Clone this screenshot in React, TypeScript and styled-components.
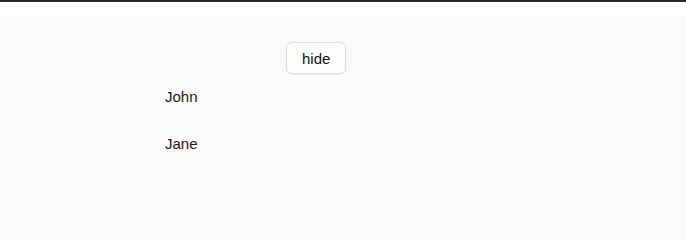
import styled, { createGlobalStyle } from "styled-components";

const GlobalStyle = createGlobalStyle`
  html, body {
    margin: 0;
    padding: 0;
    background: #fafafa;
  }
  body {
    font-family: "Liberation Sans", Arial, sans-serif;
    color: #1a1a1a;
  }
`;

const TopBar = styled.div`
  height: 2px;
  background: #2b2b2b;
`;

const Header = styled.div`
  height: 13px;
  background: #ffffff;
`;

const Main = styled.main`
  display: flex;
  flex-direction: column;
  padding-top: 27px;
  height: 196px;
`;

const Toolbar = styled.div`
  display: flex;
  padding-left: 286px;
`;

const Button = styled.button`
  height: 32px;
  padding: 0 15px;
  font-family: inherit;
  font-size: 15px;
  color: #111;
  background: #fdfdfd;
  border: 1px solid #dedede;
  border-radius: 6px;
  box-shadow: 0 1px 2px rgba(0, 0, 0, 0.06);
  cursor: pointer;
`;

const List = styled.ul`
  list-style: none;
  margin: 14px 0 0;
  padding: 0 0 0 165px;
  display: flex;
  flex-direction: column;
  gap: 29px;
`;

const Name = styled.li`
  font-size: 15px;
  line-height: 18px;
`;

const people = ["John", "Jane"];

export default function App() {
  return (
    <>
      <GlobalStyle />
      <TopBar />
      <Header />
      <Main>
        <Toolbar>
          <Button>hide</Button>
        </Toolbar>
        <List>
          {people.map((p) => (
            <Name key={p}>{p}</Name>
          ))}
        </List>
      </Main>
    </>
  );
}
